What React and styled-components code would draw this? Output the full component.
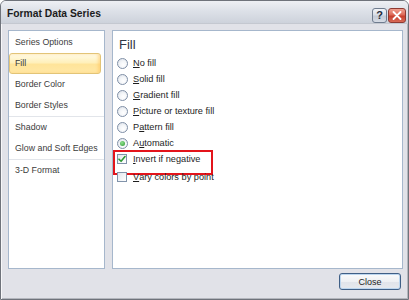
import React from "react";
import styled, { createGlobalStyle } from "styled-components";

const Global = createGlobalStyle`
  html, body { margin: 0; padding: 0; background: #ffffff; }
  body {
    font-family: "Liberation Sans", Arial, sans-serif;
    font-variant-ligatures: none;
    font-feature-settings: "liga" 0, "clig" 0;
    font-kerning: none;
  }
  * { box-sizing: border-box; }
`;

const Window = styled.div`
  width: 409px;
  height: 300px;
  border: 1px solid #6f737b;
  border-radius: 6px 6px 0 0;
  display: flex;
  flex-direction: column;
  overflow: hidden;
  background: #e1e2e8;
`;

const TitleBar = styled.div`
  height: 23px;
  flex: none;
  display: flex;
  align-items: center;
  padding: 2px 2px 0 6px;
  background: linear-gradient(#eef0f4 0%, #dde1e8 45%, #cdd2db 100%);
  border-bottom: 1px solid #c4c8d0;
`;

const Title = styled.div`
  flex: 1;
  font-size: 10.3px;
  font-weight: bold;
  color: #1c1c1c;
`;

const Controls = styled.div`
  display: flex;
  gap: 1px;
  margin-top: 4px;
`;

const CapButton = styled.div`
  width: ${(p) => p.$w}px;
  height: 15px;
  border: 1px solid ${(p) => (p.$danger ? "#8e3a32" : "#6f7c8f")};
  border-radius: 3px;
  display: flex;
  align-items: center;
  justify-content: center;
  font-size: 11px;
  font-weight: bold;
  color: #1f2a3a;
  background: ${(p) =>
    p.$danger
      ? "linear-gradient(#f0a090 0%, #dd6a58 45%, #c8402e 55%, #d86a56 100%)"
      : "linear-gradient(#f2f4f8 0%, #d9dee7 45%, #c3cad6 55%, #d7dce5 100%)"};
`;

const Body = styled.div`
  flex: 1;
  display: flex;
  flex-direction: column;
  padding: 6px 5px 9px 7px;
  box-shadow: inset 1px 0 #f7f7f9, inset -1px 0 #b3b6bd, inset 0 -1px #b3b6bd;
`;

const Panels = styled.div`
  flex: 1;
  display: flex;
  gap: 7px;
`;

const Nav = styled.div`
  width: 97px;
  flex: none;
  background: #ffffff;
  border: 1px solid #a6b7cc;
  padding-top: 1px;
  display: flex;
  flex-direction: column;
`;

const NavItem = styled.div`
  height: 21px;
  line-height: 19px;
  padding-left: 5px;
  margin-right: 3px;
  font-size: 8.8px;
  color: #3c3c3c;
  border: 1px solid ${(p) => (p.$active ? "#e2c477" : "transparent")};
  border-radius: 3px;
  background: ${(p) =>
    p.$active
      ? "linear-gradient(#fffbe8 0%, #fff0bb 45%, #ffe49a 55%, #ffe8a6 100%)"
      : "transparent"};
  box-shadow: ${(p) => (p.$active ? "inset -2px 0 3px rgba(255,190,80,0.45)" : "none")};
`;

const NavSep = styled.div`
  height: 1px;
  background: #e2e5ea;
`;

const Content = styled.div`
  flex: 1;
  background: #ffffff;
  border: 1px solid #a6b7cc;
  padding: 5px 4px;
  display: flex;
  flex-direction: column;
`;

const Heading = styled.div`
  height: 19px;
  line-height: 18px;
  margin-left: 2px;
  font-size: 13px;
  color: #2f3744;
`;

const Row = styled.div`
  position: relative;
  height: 16px;
  flex: none;
  display: flex;
  align-items: center;
  gap: 6px;
  font-size: 9.2px;
  color: #1e1e1e;
  margin-bottom: ${(p) => (p.$marked ? "2px" : "0")};
  u { text-decoration: underline; text-underline-offset: 1px; }
  ${(p) =>
    p.$marked &&
    `
    &::after {
      content: "";
      position: absolute;
      left: -4px;
      top: -1px;
      width: 96px;
      height: 21px;
      border: 2px solid #e3141b;
      pointer-events: none;
    }
  `}
`;

const Label = styled.span`
  color: #1e1e1e;
  white-space: nowrap;
`;

const Radio = styled.span`
  width: 11px;
  height: 11px;
  border-radius: 50%;
  flex: none;
  border: 1px solid #7f8fa6;
  background: radial-gradient(circle at 60% 65%, #ffffff 0%, #f3f5f8 45%, #d5dbe4 100%);
  display: flex;
  align-items: center;
  justify-content: center;
  margin-right: -1px;
  &::after {
    content: "";
    width: 5px;
    height: 5px;
    border-radius: 50%;
    background: ${(p) => (p.$on ? "radial-gradient(circle at 40% 35%, #8fe08f, #2f9a34)" : "transparent")};
  }
`;

const Box = styled.span`
  width: 10px;
  height: 10px;
  flex: none;
  border: 1px solid #8193aa;
  background: linear-gradient(135deg, #e2e7ee, #ffffff);
  display: flex;
  align-items: center;
  justify-content: center;
`;

const Footer = styled.div`
  display: flex;
  justify-content: flex-end;
  padding: 4px 2px 0 0;
`;

const Button = styled.div`
  width: 62px;
  height: 17px;
  border: 1px solid #3f5f86;
  border-radius: 3px;
  display: flex;
  align-items: center;
  justify-content: center;
  font-size: 9px;
  color: #1e1e1e;
  background: linear-gradient(#fafbfc 0%, #eef0f3 50%, #e1e4ea 51%, #e6e9ee 100%);
  box-shadow: inset 0 0 0 1px #bcd6ef;
`;

const Check = () => (
  <svg width="8" height="8" viewBox="0 0 8 8">
    <path d="M1 4.2 L3.1 6.3 L7 1.6" fill="none" stroke="#2f9a34" strokeWidth="1.6" strokeLinecap="round" strokeLinejoin="round" />
  </svg>
);

const CloseGlyph = () => (
  <svg width="10" height="9" viewBox="0 0 10 9">
    <path d="M1.5 1 L8.5 8 M8.5 1 L1.5 8" stroke="#ffffff" strokeWidth="1.8" strokeLinecap="round" />
  </svg>
);

const FILL = "f\u200Cill";

export default function App() {
  return (
    <>
      <Global />
      <Window>
        <TitleBar>
          <Title>Format Data Series</Title>
          <Controls>
            <CapButton $w={15}>?</CapButton>
            <CapButton $w={18} $danger>
              <CloseGlyph />
            </CapButton>
          </Controls>
        </TitleBar>
        <Body>
          <Panels>
            <Nav>
              <NavItem>Series Options</NavItem>
              <NavItem $active>Fill</NavItem>
              <NavItem>Border Color</NavItem>
              <NavItem>Border Styles</NavItem>
              <NavSep />
              <NavItem>Shadow</NavItem>
              <NavItem>Glow and Soft Edges</NavItem>
              <NavSep />
              <NavItem>3-D Format</NavItem>
            </Nav>
            <Content>
              <Heading>Fill</Heading>
              <Row><Radio /><Label><u>N</u>o {FILL}</Label></Row>
              <Row><Radio /><Label><u>S</u>olid {FILL}</Label></Row>
              <Row><Radio /><Label><u>G</u>radient {FILL}</Label></Row>
              <Row><Radio /><Label><u>P</u>icture or texture {FILL}</Label></Row>
              <Row><Radio /><Label>P<u>a</u>ttern {FILL}</Label></Row>
              <Row><Radio $on /><Label>A<u>u</u>tomatic</Label></Row>
              <Row $marked><Box><Check /></Box><Label><u>I</u>nvert if negative</Label></Row>
              <Row><Box /><Label><u>V</u>ary colors by point</Label></Row>
            </Content>
          </Panels>
          <Footer>
            <Button>Close</Button>
          </Footer>
        </Body>
      </Window>
    </>
  );
}
